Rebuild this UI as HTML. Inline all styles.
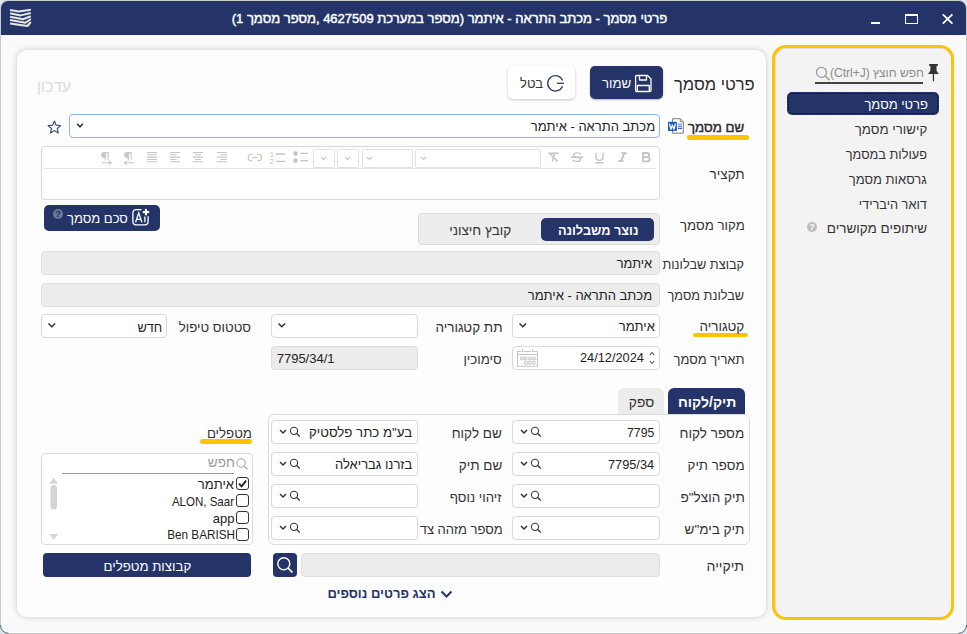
<!DOCTYPE html>
<html lang="he" dir="rtl">
<head>
<meta charset="utf-8">
<style>
html,body{margin:0;padding:0;}
body{width:967px;height:634px;overflow:hidden;position:relative;background:#dfe5ef;font-family:"Liberation Sans",sans-serif;color:#333;}
*{box-sizing:border-box;}
.a{position:absolute;}
.t{position:absolute;white-space:nowrap;direction:rtl;}
.win{position:absolute;left:0;top:0;width:967px;height:634px;border:1px solid #c8cacb;border-radius:8px;background:#fafafa;overflow:hidden;}
.tb{position:absolute;left:0;top:0;width:965px;height:34px;background:#243468;}
.panel{position:absolute;left:17px;top:50px;width:749px;height:567px;background:#fdfdfd;border-radius:10px;box-shadow:0 0 6px rgba(0,0,0,0.2);}
.side{position:absolute;left:772px;top:45px;width:182px;height:575px;border:3px solid #ffc300;border-radius:14px;background:#f3f3f3;box-shadow:inset 1px 1px 0 #dde0ea;}
.inp{position:absolute;border:1px solid #d9d9d9;border-radius:4px;background:#fff;}
.gray{background:#ececec;border-color:#dedede;}
.navy{background:#243468;color:#fff;}
.ul{position:absolute;height:4px;background:#fdc300;border-radius:2px;}
</style>
</head>
<body>
<div class="win"><div class="tb"></div></div>
<svg class="a" style="left:0;top:616px" width="967" height="18" viewBox="0 616 967 18"><path d="M0.5 625 A8 8 0 0 0 8.5 633.3 M966.5 625 A8 8 0 0 1 958.5 633.3" fill="none" stroke="#646b82" stroke-width="1"/></svg>
<svg class="a" style="left:0;top:0" width="40" height="34" viewBox="0 0 40 34">
 <g fill="none" stroke="#e6e6e6" stroke-width="2" stroke-linejoin="round">
  <path d="M10 9.9 L18.5 11.6 L30.8 9.8"/>
  <path d="M10 13.3 L20.5 15.4 L30.8 13"/>
  <path d="M10 16.8 L23 19.2 L30.8 16.2"/>
  <path d="M10 20.1 L25.5 22.8 L30.8 19"/>
  <path d="M10 23.4 L27.5 26 L30.8 22"/>
 </g>
</svg>
<div class="a" style="left:871px;top:22px;width:9px;height:2px;background:#fff"></div>
<div class="a" style="left:905px;top:14px;width:13px;height:10px;border:1.6px solid #fff;border-top-width:2px"></div>
<svg class="a" style="left:940px;top:12px" width="15" height="14" viewBox="0 0 15 14"><path d="M2.8 2.4 L12.4 11.6 M12.4 2.4 L2.8 11.6" stroke="#fff" stroke-width="1.8"/></svg>

<div class="panel"></div>
<div class="side"></div>

<!-- save / cancel -->
<div class="a navy" style="left:590px;top:66px;width:73px;height:33px;border-radius:5px;box-shadow:0 1px 2px rgba(0,0,0,.3)"></div>
<svg class="a" style="left:634px;top:74px" width="19" height="19" viewBox="0 0 19 19"><g fill="none" stroke="#fff" stroke-width="1.3" stroke-linejoin="round"><path d="M1.6 2.8 Q1.6 1.5 2.9 1.5 H13.5 L17 5 V16.2 Q17 17.5 15.7 17.5 H2.9 Q1.6 17.5 1.6 16.2 Z"/><path d="M5.5 1.5 V6 H12.5 V1.5"/><path d="M3.3 17.5 V11.5 H15.3 V17.5"/></g></svg>
<div class="a" style="left:508px;top:66px;width:67px;height:33px;border-radius:5px;background:#fff;box-shadow:0 1px 3px rgba(0,0,0,.22)"></div>
<svg class="a" style="left:546px;top:74px" width="19" height="19" viewBox="0 0 19 19"><g fill="none" stroke="#2b3a6b" stroke-width="1.3"><path d="M16.54 6.42 A7.7 7.7 0 1 0 16.54 12.18"/><path d="M11 9.3 H18"/></g></svg>

<!-- doc name row -->
<div class="ul" style="left:687px;top:135px;width:62px;height:5px;border-radius:3px"></div>
<svg class="a" style="left:666px;top:116px" width="20" height="19" viewBox="666 116 20 19"><path d="M672.6 118.7 H680.3 L683.3 121.7 V133.2 H672.6 Z" fill="#fff" stroke="#7a7a7a" stroke-width="1"/><path d="M680.3 118.7 V121.7 H683.3" fill="#ddd" stroke="#7a7a7a" stroke-width="0.9"/><path d="M678 124.2 H682" stroke="#3a9ee6" stroke-width="1.1"/><path d="M678 126.3 H682 M678 128.4 H682" stroke="#2a62c0" stroke-width="1.1"/><rect x="668" y="121.8" width="8.9" height="9.1" fill="#1f5bc2"/><path d="M669.4 123.6 L670.9 129.2 L672.45 125.1 L674 129.2 L675.5 123.6" fill="none" stroke="#fff" stroke-width="1.3" stroke-linejoin="round"/></svg>
<div class="inp" style="left:69px;top:114px;width:591px;height:24px;border-color:#8ab6ea;"></div>
<svg class="a" style="left:76px;top:122px" width="8" height="7" viewBox="0 0 8 7"><path d="M1.2 1.8 L4 4.8 L6.8 1.8" fill="none" stroke="#333" stroke-width="1.6"/></svg>
<svg class="a" style="left:40px;top:110px" width="30" height="30" viewBox="40 110 30 30"><path d="M54.40 121.00 L56.16 125.17 L60.68 125.56 L57.25 128.53 L58.28 132.94 L54.40 130.60 L50.52 132.94 L51.55 128.53 L48.12 125.56 L52.64 125.17 Z" fill="none" stroke="#34467a" stroke-width="1.1" stroke-linejoin="round"/></svg>

<!-- editor -->
<div class="inp" style="left:41px;top:146px;width:619px;height:54px;border-color:#dadada;"></div>
<div class="a" style="left:44px;top:168px;width:612px;height:1px;background:#e3e3e3"></div>
<!-- editor toolbar icons -->
<svg class="a" style="left:40px;top:146px" width="620" height="24" viewBox="40 146 620 24">
 <g fill="none" stroke="#c4c4c4" stroke-width="1.2">
  <!-- B -->
  <path d="M643 153 H646.8 Q649.2 153 649.2 155.1 Q649.2 157.1 646.8 157.1 H643 Z M643 157.1 H647.3 Q649.7 157.1 649.7 159.2 Q649.7 161.3 647.3 161.3 H643 Z" stroke-width="1.8" stroke="#c2c2c2"/>
  <!-- I -->
  <path d="M621.5 153.2 H626.8 M618.3 161.2 H623.6 M624.4 153.2 L621 161.2" stroke-width="1.8" stroke="#c2c2c2"/>
  <!-- U -->
  <path d="M596 152.8 V157.3 Q596 160.4 599.5 160.4 Q603 160.4 603 157.3 V152.8 M595.3 162.8 H603.7" stroke-width="1.4"/>
  <!-- S strike -->
  <path d="M581.3 154.3 Q580 152.9 577 152.9 Q573.6 152.9 573.6 155 Q573.6 156.9 577 157.2 Q580.6 157.5 580.6 159.4 Q580.6 161.4 577 161.4 Q574 161.4 572.6 159.9 M571 157.2 H583" stroke-width="1.4"/>
  <!-- clear format -->
  <path d="M548.3 153.2 H558.5 M554.6 153.2 L552.3 161.5 M549.5 153 L557.5 161.6" stroke-width="1.4"/>
  <!-- lists -->
  <circle cx="295.5" cy="153.6" r="2.3" fill="#c4c4c4" stroke="none"/><circle cx="295.5" cy="160.6" r="2.3" fill="#c4c4c4" stroke="none"/>
  <path d="M300.5 153.3 H308 M300.5 160.6 H308" stroke-width="1.3"/>
  <path d="M276 154 H285 M276 161.3 H285" stroke-width="1.3"/>
  <!-- link -->
  <path d="M252.5 154.3 H251 Q248.2 154.3 248.2 157.5 Q248.2 160.8 251 160.8 H252.5 M257 154.3 H258.5 Q261.5 154.3 261.5 157.5 Q261.5 160.8 258.5 160.8 H257 M252 157.5 H257.5" stroke-width="1.1"/>
  <!-- align icons -->
  <path d="M217 152.5 H227 M220.5 154.8 H227 M217 157.1 H227 M220.5 159.4 H227 M217 161.7 H227" stroke-width="1.05" stroke="#c6c6c6"/>
  <path d="M193 152.5 H203 M195 154.8 H201 M193 157.1 H203 M195 159.4 H201 M193 161.7 H203" stroke-width="1.05" stroke="#c6c6c6"/>
  <path d="M170 152.5 H180 M170 154.8 H176.5 M170 157.1 H180 M170 159.4 H176.5 M170 161.7 H180" stroke-width="1.05" stroke="#c6c6c6"/>
  <path d="M147 152.5 H157 M147 154.8 H157 M147 157.1 H157 M147 159.4 H157 M147 161.7 H157" stroke-width="1.05" stroke="#c6c6c6"/>
  <!-- pilcrows -->
  <g stroke="#c8c8c8" stroke-width="1.1">
  <path d="M128.3 152.6 V160.5 M131.2 152.6 V160.5 M131.8 152.6 H128"/>
  <path d="M128.6 152.6 H127.6 Q124.6 152.6 124.6 155 Q124.6 157.4 127.6 157.4 H128.6 Z" fill="#c8c8c8"/>
  <path d="M134.2 162.8 H124.5 M126.7 160.8 L124.5 162.8 L126.7 164.8"/>
  <path d="M105.3 152.6 V160.5 M108.2 152.6 V160.5 M108.8 152.6 H105"/>
  <path d="M105.6 152.6 H104.6 Q101.6 152.6 101.6 155 Q101.6 157.4 104.6 157.4 H105.6 Z" fill="#c8c8c8"/>
  <path d="M101.5 162.8 H111.2 M109 160.8 L111.2 162.8 L109 164.8"/>
  </g>
 </g>
 <g font-family="Liberation Sans" font-size="7.5" fill="#c0c0c0" direction="ltr" style="direction:ltr"><text x="269.8" y="157.2">1</text><text x="269.6" y="164.3">2</text></g>
 <g fill="none" stroke="#e2e2e2" stroke-width="1">
  <rect x="313.5" y="149.5" width="21" height="18" rx="1"/>
  <rect x="337.5" y="149.5" width="21" height="18" rx="1"/>
  <rect x="362.5" y="149.5" width="50" height="18" rx="1"/>
  <rect x="415.5" y="149.5" width="125" height="18" rx="1"/>
 </g>
 <g fill="none" stroke="#c8c8c8" stroke-width="1.1">
  <path d="M321 157 L323.5 159.5 L326 157"/>
  <path d="M345 157 L347.5 159.5 L350 157"/>
  <path d="M367 157 L369.5 159.5 L372 157"/>
  <path d="M421 157 L423.5 159.5 L426 157"/>
 </g>
</svg>

<!-- source toggle -->
<div class="a" style="left:418px;top:213px;width:242px;height:32px;border-radius:4px;background:#ededed;border:1px solid #dcdcdc"></div>
<div class="a navy" style="left:541px;top:218px;width:113px;height:23px;border-radius:5px"></div>
<!-- AI summary -->
<div class="a navy" style="left:44px;top:205px;width:116px;height:26px;border-radius:5px"></div>
<svg class="a" style="left:130px;top:207px" width="21" height="21" viewBox="0 0 21 21"><path d="M11.6 2.7 H6.2 Q2.9 2.7 2.9 6 V14.6 Q2.9 17.9 6.2 17.9 H14.8 Q18.1 17.9 18.1 14.6 V9.2" fill="none" stroke="#fff" stroke-width="1.3"/><path d="M16 2.7 V7.5 M13.6 5.1 H18.4" stroke="#fff" stroke-width="2.1" stroke-linecap="round"/><path d="M5.6 15.3 L8.7 6.1 L11.9 15.3 M6.7 12.3 H10.9" fill="none" stroke="#fff" stroke-width="1.3"/><path d="M14.9 9.6 V15.3" stroke="#fff" stroke-width="1.3"/></svg>
<div class="a" style="left:53px;top:209px;width:10px;height:10px;border-radius:50%;background:#6c7697;color:#1e2d5e;font-size:9px;line-height:10px;text-align:center;font-weight:bold">?</div>

<!-- template rows -->
<div class="inp gray" style="left:41px;top:251px;width:619px;height:24px;"></div>
<div class="inp gray" style="left:41px;top:283px;width:619px;height:24px;"></div>
<div class="ul" style="left:693px;top:333px;width:55px;"></div>
<div class="inp" style="left:512px;top:314px;width:148px;height:24px;"></div>
<div class="inp" style="left:271px;top:314px;width:147px;height:24px;"></div>
<div class="inp" style="left:41px;top:314px;width:126px;height:24px;"></div>
<svg class="a" style="left:0;top:0" width="967" height="634" viewBox="0 0 967 634">
 <g fill="none" stroke="#333" stroke-width="1.5">
  <path d="M519.5 323.5 L522.8 326.8 L526.1 323.5"/>
  <path d="M278.5 323.5 L281.8 326.8 L285.1 323.5"/>
  <path d="M48.5 323.5 L51.8 326.8 L55.1 323.5"/>
 </g>
</svg>
<div class="inp" style="left:512px;top:346px;width:148px;height:24px;"></div>
<svg class="a" style="left:648px;top:350px" width="8" height="16" viewBox="0 0 8 16"><path d="M1.8 5 L4 2.5 L6.2 5 M1.8 11 L4 13.5 L6.2 11" fill="none" stroke="#555" stroke-width="1.1"/></svg>
<svg class="a" style="left:516px;top:348px" width="23" height="20" viewBox="0 0 23 20"><g fill="none" stroke="#c6c6c6" stroke-width="1"><path d="M5.3 3.5 H1.5 V18.3 H21.5 V3.5 H17.6 M8 3.5 H15.5 M1.5 6.5 H21.5"/><path d="M6.6 1.2 V4 M16.6 1.2 V4" stroke-width="1.2"/><path d="M4.5 9.3 h2.7 v2.4 h-2.7z M8.1 9.3 h2.7 v2.4 h-2.7z M12.7 9.3 h2.5 v2.4 h-2.5z M16.8 9.3 h2.3 v2.4 h-2.3z M8.6 13.2 h2.7 v3 h-2.7z M12.7 13.2 h2.5 v3 h-2.5z M16.8 13.2 h2.3 v3 h-2.3z"/></g></svg>
<div class="inp gray" style="left:271px;top:346px;width:147px;height:24px;"></div>

<!-- tabs -->
<div class="a" style="left:618px;top:388px;width:46px;height:27px;border-radius:6px 6px 0 0;background:#ececec;"></div>
<div class="a navy" style="left:668px;top:388px;width:77px;height:27px;border-radius:6px 6px 0 0;"></div>
<div class="a" style="left:268px;top:414px;width:482px;height:131px;border:1px solid #dcdcdc;border-radius:6px;background:#fdfdfd;"></div>
<div class="inp" style="left:512px;top:420px;width:148px;height:24px;"></div>
<div class="inp" style="left:512px;top:452px;width:148px;height:24px;"></div>
<div class="inp" style="left:512px;top:484px;width:148px;height:24px;"></div>
<div class="inp" style="left:512px;top:516px;width:148px;height:24px;"></div>
<div class="inp" style="left:271px;top:420px;width:147px;height:24px;"></div>
<div class="inp" style="left:271px;top:452px;width:147px;height:24px;"></div>
<div class="inp" style="left:271px;top:484px;width:147px;height:24px;"></div>
<div class="inp" style="left:271px;top:516px;width:147px;height:24px;"></div>
<svg class="a" style="left:0;top:0" width="967" height="634" viewBox="0 0 967 634">
 <g fill="none" stroke="#333">
  <g transform="translate(0 0)"><path d="M521 430 L524 433 L527 430" stroke-width="1.5"/><circle cx="535" cy="430.8" r="3.6" stroke-width="1.05"/><path d="M537.7 433.5 L540.8 436.6" stroke-width="1.3"/></g>
  <g transform="translate(0 32)"><path d="M521 430 L524 433 L527 430" stroke-width="1.5"/><circle cx="535" cy="430.8" r="3.6" stroke-width="1.05"/><path d="M537.7 433.5 L540.8 436.6" stroke-width="1.3"/></g>
  <g transform="translate(0 64)"><path d="M521 430 L524 433 L527 430" stroke-width="1.5"/><circle cx="535" cy="430.8" r="3.6" stroke-width="1.05"/><path d="M537.7 433.5 L540.8 436.6" stroke-width="1.3"/></g>
  <g transform="translate(0 96)"><path d="M521 430 L524 433 L527 430" stroke-width="1.5"/><circle cx="535" cy="430.8" r="3.6" stroke-width="1.05"/><path d="M537.7 433.5 L540.8 436.6" stroke-width="1.3"/></g>
  <g transform="translate(-241 0)"><path d="M521 430 L524 433 L527 430" stroke-width="1.5"/><circle cx="535" cy="430.8" r="3.6" stroke-width="1.05"/><path d="M537.7 433.5 L540.8 436.6" stroke-width="1.3"/></g>
  <g transform="translate(-241 32)"><path d="M521 430 L524 433 L527 430" stroke-width="1.5"/><circle cx="535" cy="430.8" r="3.6" stroke-width="1.05"/><path d="M537.7 433.5 L540.8 436.6" stroke-width="1.3"/></g>
  <g transform="translate(-241 64)"><path d="M521 430 L524 433 L527 430" stroke-width="1.5"/><circle cx="535" cy="430.8" r="3.6" stroke-width="1.05"/><path d="M537.7 433.5 L540.8 436.6" stroke-width="1.3"/></g>
  <g transform="translate(-241 96)"><path d="M521 430 L524 433 L527 430" stroke-width="1.5"/><circle cx="535" cy="430.8" r="3.6" stroke-width="1.05"/><path d="M537.7 433.5 L540.8 436.6" stroke-width="1.3"/></g>
 </g>
</svg>

<!-- folder row -->
<div class="inp gray" style="left:301px;top:553px;width:359px;height:24px;"></div>
<div class="a navy" style="left:273px;top:553px;width:24px;height:24px;border-radius:4px;"></div>
<svg class="a" style="left:273px;top:553px" width="24" height="24" viewBox="0 0 24 24"><circle cx="10.8" cy="10.8" r="6" fill="none" stroke="#fff" stroke-width="1.4"/><path d="M15 15 L19.5 19.5" stroke="#fff" stroke-width="1.7"/></svg>
<svg class="a" style="left:440px;top:590px" width="13" height="9" viewBox="0 0 13 9"><path d="M1.5 1.5 L6.5 6.5 L11.5 1.5" fill="none" stroke="#243468" stroke-width="2"/></svg>

<!-- handlers -->
<div class="ul" style="left:200px;top:439px;width:52px;height:5px;border-radius:3px"></div>
<div class="inp" style="left:41px;top:453px;width:212px;height:92px;border-color:#dcdcdc;"></div>
<svg class="a" style="left:235px;top:457px" width="14" height="14" viewBox="0 0 14 14"><circle cx="6" cy="6" r="4.2" fill="none" stroke="#a6a6a6" stroke-width="1.1"/><path d="M9 9 L12.5 12.3" stroke="#a6a6a6" stroke-width="1.3"/></svg>
<div class="a" style="left:62px;top:473px;width:172px;height:1px;background:#9a9a9a"></div>
<div class="a" style="left:236px;top:477px;width:13px;height:13px;border:1.3px solid #333;border-radius:3px;background:#fff"></div>
<svg class="a" style="left:236px;top:477px" width="13" height="13" viewBox="0 0 13 13"><path d="M3 6.6 L5.5 9.3 L10.2 3.6" fill="none" stroke="#222" stroke-width="1.9"/></svg>
<div class="a" style="left:236px;top:494px;width:13px;height:13px;border:1.3px solid #333;border-radius:3px;background:#fff"></div>
<div class="a" style="left:236px;top:511px;width:13px;height:13px;border:1.3px solid #333;border-radius:3px;background:#fff"></div>
<div class="a" style="left:236px;top:528px;width:13px;height:13px;border:1.3px solid #333;border-radius:3px;background:#fff"></div>
<svg class="a" style="left:48px;top:476px" width="12" height="66" viewBox="0 0 12 66"><path d="M1.2 7.7 L5.7 1.7 L10.2 7.7 Z" fill="#d6d6d6"/><rect x="2.5" y="9" width="6.5" height="24.5" rx="3.2" fill="#d4d4d4"/><path d="M1.2 58 L5.7 64 L10.2 58 Z" fill="#d6d6d6"/></svg>
<div class="a navy" style="left:43px;top:553px;width:208px;height:24px;border-radius:4px;"></div>

<!-- sidebar -->
<svg class="a" style="left:926px;top:63px" width="15" height="20" viewBox="0 0 15 20"><path d="M3.2 1.1 H11.8 V2.9 H10.6 Q10.3 5.3 10.6 7.7 L12.8 10.9 H2.1 L4.3 7.7 Q4.6 5.3 4.3 2.9 H3.2 Z" fill="#333"/><path d="M7.45 10.5 V18.3" stroke="#333" stroke-width="1.2"/></svg>
<svg class="a" style="left:815px;top:66px" width="17" height="15" viewBox="0 0 17 15"><circle cx="6.5" cy="6.3" r="5" fill="none" stroke="#9a9a9a" stroke-width="1.3"/><path d="M10.2 10 L14.6 14.3" stroke="#9a9a9a" stroke-width="1.5"/></svg>
<div class="a" style="left:815px;top:82px;width:108px;height:1.5px;background:#444"></div>
<div class="a navy" style="left:787px;top:92px;width:152px;height:23px;border-radius:5px;"></div><svg class="a" style="left:787px;top:92px" width="152" height="23" viewBox="0 0 152 23"><rect x="1.5" y="1.5" width="149" height="20" rx="3.5" fill="none" stroke="#0c1228" stroke-width="1" stroke-dasharray="1.5 1.5"/></svg>
<div class="a" style="left:807px;top:222px;width:10px;height:10px;border-radius:50%;background:#bdbdbd;color:#fff;font-size:9px;line-height:10px;text-align:center;font-weight:bold">?</div>
<div class="t" style="left:231.7px;top:10.0px;font-size:13.0px;font-weight:400;-webkit-text-stroke:0.45px #fff;line-height:17px;color:#fff;">פרטי מסמך - מכתב התראה - איתמר (מספר במערכת 4627509 ,מספר מסמך 1)</div>
<div class="t" style="left:36.7px;top:75.6px;font-size:16.0px;font-weight:400;line-height:21px;color:#dcdcdc;">עדכון</div>
<div class="t" style="left:674.0px;top:73.6px;font-size:16.5px;font-weight:400;line-height:21px;color:#2a2a2a;">פרטי מסמך</div>
<div class="t" style="left:602.0px;top:74.8px;font-size:13.25px;font-weight:400;line-height:17px;color:#fff;">שמור</div>
<div class="t" style="left:520.0px;top:74.8px;font-size:13.0px;font-weight:400;line-height:17px;color:#333;">בטל</div>
<div class="t" style="left:688.0px;top:118.5px;font-size:13.25px;font-weight:400;-webkit-text-stroke:0.45px #2a2a2a;line-height:17px;color:#2a2a2a;">שם מסמך</div>
<div class="t" style="left:530.7px;top:118.2px;font-size:13.0px;font-weight:400;line-height:17px;color:#222;">מכתב התראה - איתמר</div>
<div class="t" style="left:709.6px;top:165.9px;font-size:13.5px;font-weight:400;line-height:18px;color:#333;">תקציר</div>
<div class="t" style="left:680.0px;top:217.0px;font-size:13.25px;font-weight:400;line-height:17px;color:#333;">מקור מסמך</div>
<div class="t" style="left:557.9px;top:222.2px;font-size:12.75px;font-weight:700;line-height:17px;color:#fff;">נוצר משבלונה</div>
<div class="t" style="left:449.2px;top:222.2px;font-size:13.5px;font-weight:400;line-height:18px;color:#333;">קובץ חיצוני</div>
<div class="t" style="left:67.0px;top:209.6px;font-size:13.0px;font-weight:400;line-height:17px;color:#fff;">סכם מסמך</div>
<div class="t" style="left:662.5px;top:255.7px;font-size:12.75px;font-weight:400;line-height:17px;color:#333;">קבוצת שבלונות</div>
<div class="t" style="left:616.7px;top:255.0px;font-size:12.75px;font-weight:400;line-height:17px;color:#222;">איתמר</div>
<div class="t" style="left:667.5px;top:287.0px;font-size:12.75px;font-weight:400;line-height:17px;color:#333;">שבלונת מסמך</div>
<div class="t" style="left:527.7px;top:287.0px;font-size:13.0px;font-weight:400;line-height:17px;color:#222;">מכתב התראה - איתמר</div>
<div class="t" style="left:699.5px;top:318.2px;font-size:13.5px;font-weight:400;line-height:18px;color:#333;">קטגוריה</div>
<div class="t" style="left:618.7px;top:318.0px;font-size:13.0px;font-weight:400;line-height:17px;color:#222;">איתמר</div>
<div class="t" style="left:435.4px;top:318.5px;font-size:13.5px;font-weight:400;line-height:18px;color:#333;">תת קטגוריה</div>
<div class="t" style="left:178.8px;top:318.8px;font-size:13.25px;font-weight:400;line-height:17px;color:#333;">סטטוס טיפול</div>
<div class="t" style="left:137.5px;top:318.8px;font-size:12.75px;font-weight:400;line-height:17px;color:#222;">חדש</div>
<div class="t" style="left:673.5px;top:350.6px;font-size:13.0px;font-weight:400;line-height:17px;color:#333;">תאריך מסמך</div>
<div class="t" style="left:580.0px;top:348.8px;font-size:12.75px;font-weight:400;line-height:17px;color:#222;">24/12/2024</div>
<div class="t" style="left:463.4px;top:350.5px;font-size:13.25px;font-weight:400;line-height:17px;color:#333;">סימוכין</div>
<div class="t" style="left:276.7px;top:350.2px;font-size:13.0px;font-weight:400;line-height:17px;color:#222;">7795/34/1</div>
<div class="t" style="left:678.0px;top:392.7px;font-size:14.0px;font-weight:700;line-height:18px;color:#fff;">תיק/לקוח</div>
<div class="t" style="left:628.8px;top:393.7px;font-size:13.75px;font-weight:400;line-height:18px;color:#333;">ספק</div>
<div class="t" style="left:679.6px;top:425.4px;font-size:13.5px;font-weight:400;line-height:18px;color:#333;">מספר לקוח</div>
<div class="t" style="left:687.6px;top:456.9px;font-size:13.25px;font-weight:400;line-height:17px;color:#333;">מספר תיק</div>
<div class="t" style="left:680.6px;top:489.0px;font-size:13.5px;font-weight:400;line-height:18px;color:#333;">תיק הוצל"פ</div>
<div class="t" style="left:684.6px;top:521.4px;font-size:13.5px;font-weight:400;line-height:18px;color:#333;">תיק בימ"ש</div>
<div class="t" style="left:451.7px;top:425.0px;font-size:13.5px;font-weight:400;line-height:18px;color:#333;">שם לקוח</div>
<div class="t" style="left:458.7px;top:457.0px;font-size:13.5px;font-weight:400;line-height:18px;color:#333;">שם תיק</div>
<div class="t" style="left:449.7px;top:489.0px;font-size:13.25px;font-weight:400;line-height:17px;color:#333;">זיהוי נוסף</div>
<div class="t" style="left:419.7px;top:521.0px;font-size:13.0px;font-weight:400;line-height:17px;color:#333;">מספר מזהה צד</div>
<div class="t" style="left:627.0px;top:425.0px;font-size:12.25px;font-weight:400;line-height:16px;color:#222;">7795</div>
<div class="t" style="left:608.0px;top:456.3px;font-size:12.75px;font-weight:400;line-height:17px;color:#222;">7795/34</div>
<div class="t" style="left:309.0px;top:423.5px;font-size:13.25px;font-weight:400;line-height:17px;color:#222;">בע"מ כתר פלסטיק</div>
<div class="t" style="left:335.0px;top:455.8px;font-size:13.0px;font-weight:400;line-height:17px;color:#222;">בזרנו גבריאלה</div>
<div class="t" style="left:706.6px;top:556.7px;font-size:14.0px;font-weight:400;line-height:18px;color:#333;">תיקייה</div>
<div class="t" style="left:327.4px;top:585.4px;font-size:13.0px;font-weight:700;line-height:17px;color:#243468;">הצג פרטים נוספים</div>
<div class="t" style="left:206.9px;top:425.1px;font-size:13.25px;font-weight:400;line-height:17px;color:#333;">מטפלים</div>
<div class="t" style="left:207.8px;top:453.9px;font-size:13.5px;font-weight:400;line-height:18px;color:#9a9a9a;">חפש</div>
<div class="t" style="left:197.8px;top:475.6px;font-size:13.0px;font-weight:400;line-height:17px;color:#222;">איתמר</div>
<div class="t" style="transform:scaleX(0.900);transform-origin:69.00px 0;left:164.8px;top:492.7px;font-size:12.8px;font-weight:400;line-height:17px;color:#222;"><span dir="ltr">ALON, Saar</span></div>
<div class="t" style="left:212.8px;top:509.9px;font-size:13.0px;font-weight:400;line-height:17px;color:#222;"><span dir="ltr">app</span></div>
<div class="t" style="transform:scaleX(0.914);transform-origin:73.00px 0;left:160.8px;top:526.3px;font-size:12.8px;font-weight:400;line-height:17px;color:#222;"><span dir="ltr">Ben BARISH</span></div>
<div class="t" style="left:103.5px;top:557.5px;font-size:13.25px;font-weight:400;line-height:17px;color:#fff;">קבוצות מטפלים</div>
<div class="t" style="left:830.0px;top:65.3px;font-size:12.0px;font-weight:400;line-height:16px;color:#8a8a8a;">חפש חוצץ <span dir="ltr">(Ctrl+J)</span></div>
<div class="t" style="left:864.4px;top:95.8px;font-size:13.0px;font-weight:400;line-height:17px;color:#fff;">פרטי מסמך</div>
<div class="t" style="left:854.8px;top:120.7px;font-size:13.25px;font-weight:400;line-height:17px;color:#333;">קישורי מסמך</div>
<div class="t" style="left:845.8px;top:145.8px;font-size:12.75px;font-weight:400;line-height:17px;color:#333;">פעולות במסמך</div>
<div class="t" style="left:848.8px;top:170.6px;font-size:13.0px;font-weight:400;line-height:17px;color:#333;">גרסאות מסמך</div>
<div class="t" style="left:858.8px;top:195.7px;font-size:12.75px;font-weight:400;line-height:17px;color:#333;">דואר היברידי</div>
<div class="t" style="left:826.8px;top:220.3px;font-size:13.5px;font-weight:400;line-height:18px;color:#333;">שיתופים מקושרים</div>
</body>
</html>
